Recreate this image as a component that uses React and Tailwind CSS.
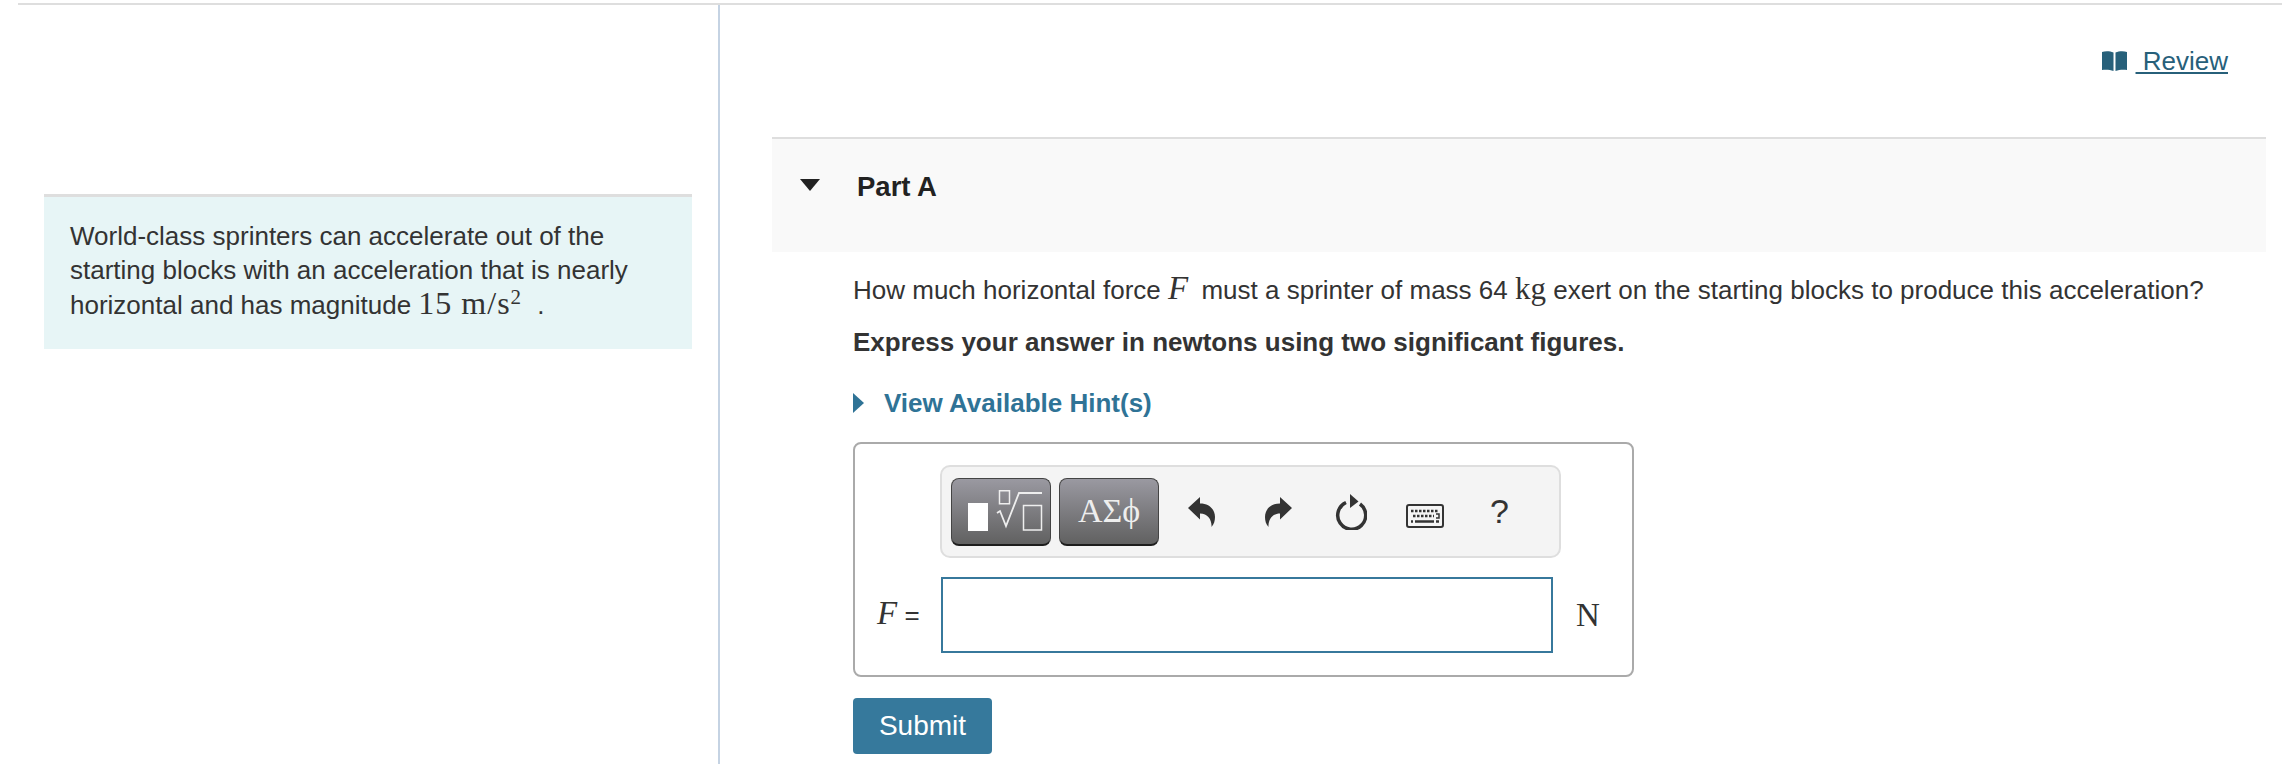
import React from 'react';

const sans = 'font-["Liberation_Sans",Arial,sans-serif]';
const math = 'font-["Liberation_Serif","Times_New_Roman",serif]';

const BookIcon = () => (
  <svg width="25" height="20" viewBox="0 0 25 20" className="shrink-0">
    <path d="M0 1 C3 0 8 0 11.500 1.500 L11.500 20 C8 18.500 3 18.500 0 19 Z" fill="#27607a" />
    <path d="M25 1 C22 0 17 0 13.500 1.500 L13.500 20 C17 18.500 22 18.500 25 19 Z" fill="#27607a" />
  </svg>
);

const SqrtIcon = () => (
  <svg width="76" height="42" viewBox="0 0 76 42" className="ml-[8px]">
    <rect x="1" y="13" width="20" height="28" fill="#fff" />
    <rect x="32.500" y="0.750" width="10" height="13" fill="none" stroke="#eee" strokeWidth="1.500" />
    <path d="M30 23 L33 21 L39 36 L52 3 L75 3" fill="none" stroke="#eee" strokeWidth="1.800" />
    <rect x="56.500" y="15.500" width="18" height="24.500" fill="none" stroke="#eee" strokeWidth="1.500" />
  </svg>
);

const UndoIcon = ({ flip }) => (
  <svg width="27" height="30" viewBox="0 0 27 30" className={flip ? '-scale-x-100' : ''}>
    <path d="M0 11 L12 0 L12 6.500 C22 6.500 27 13 27 20 C27 24 26 27 23.500 30 C24 23 20 16.500 12 16.500 L12 22.500 Z" fill="#333" />
  </svg>
);

const RefreshIcon = () => (
  <svg width="32" height="36" viewBox="0 0 32 36">
    <path d="M11 8.500 A14 14 0 1 0 25 10" fill="none" stroke="#333" strokeWidth="3.500" />
    <path d="M15 0 L23.500 7.500 L15 14 Z" fill="#333" />
  </svg>
);

const KeyboardIcon = () => (
  <svg width="38" height="24" viewBox="0 0 38 24">
    <rect x="1" y="1" width="36" height="22" rx="2" fill="none" stroke="#333" strokeWidth="2" />
    <path d="M5 7 H32" stroke="#333" strokeWidth="2.500" strokeDasharray="2.500 1.500" fill="none" />
    <path d="M7 12 H28" stroke="#333" strokeWidth="2.500" strokeDasharray="2.500 1.500" fill="none" />
    <path d="M30 10 H33 V14 H30" stroke="#333" strokeWidth="1.500" fill="none" />
    <path d="M5 17.500 H7" stroke="#333" strokeWidth="2.500" fill="none" />
    <path d="M9 17.500 H28" stroke="#333" strokeWidth="2.500" fill="none" />
    <path d="M30 17.500 H33" stroke="#333" strokeWidth="2.500" fill="none" />
  </svg>
);

const ToolButton = ({ children }) => (
  <div className="flex h-[68px] items-center justify-center rounded-[8px] border border-[#444] border-b-[2px] border-b-[#1d1d1d] bg-linear-to-b from-[#9a99a1] to-[#616161]">
    {children}
  </div>
);

export default function App() {
  return (
    <div className={`${sans} h-[764px] w-[2282px] overflow-hidden bg-white pt-[3px] pl-[18px] text-[26px] leading-[33.6px] text-[#333]`}>
      <div className="h-[2px] bg-[#dedede]" />
      <div className="flex h-[759px]">
        {/* left column */}
        <div className="w-[702px] shrink-0 border-r-2 border-[#c5d3e3] pt-[189px] pl-[26px]">
          <div className="h-[155px] w-[648px] border-t-[3px] border-[#dedede] bg-[#e7f5f6] px-[26px] pt-[23px]">
            <p>
              World-class sprinters can accelerate out of the starting blocks with an acceleration that is nearly
              horizontal and has magnitude{' '}
              <span className={`${math} text-[32px] leading-none tracking-[1px]`}>
                15 m/s<sup className="text-[21px] leading-none">2</sup>
              </span>{' '}
              <span className="ml-[8px]">.</span>
            </p>
          </div>
        </div>

        {/* right column */}
        <div className="w-[1546px] shrink-0 pl-[52px]">
          <div className="flex h-[132px] items-start justify-end pt-[43px] pr-[38px]">
            <a className="flex items-center gap-[9px] text-[#27607a]">
              <BookIcon />
              <span className="text-[26px] leading-[26px] underline">&nbsp;Review</span>
            </a>
          </div>

          <div className="flex h-[115px] items-start border-t-[2px] border-[#dedede] bg-[#f9f9f9] pt-[29px]">
            <svg width="20" height="12" viewBox="0 0 20 12" className="mt-[11px] ml-[28px]">
              <path d="M0 0 H20 L10 12 Z" fill="#222" />
            </svg>
            <h2 className="ml-[37px] text-[27.5px] font-bold leading-[38px] text-[#222]">Part A</h2>
          </div>

          <div className="pl-[81px]">
            <p className="pt-[20px] whitespace-nowrap">
              How much horizontal force <span className={`${math} pr-[6px] text-[33px] italic leading-none`}>F</span> must a
              sprinter of mass 64 <span className={`${math} text-[31px] leading-none`}>kg</span> exert on the starting
              blocks to produce this acceleration?
            </p>
            <p className="mt-[18px] font-bold">Express your answer in newtons using two significant figures.</p>
            <div className="mt-[26px] flex items-center">
              <svg width="11" height="20" viewBox="0 0 11 20">
                <path d="M0 0 L11 10 L0 20 Z" fill="#2f7396" />
              </svg>
              <span className="ml-[20px] text-[26px] font-bold leading-[36px] text-[#2f7396]">View Available Hint(s)</span>
            </div>

            {/* answer box */}
            <div className="mt-[21px] h-[235px] w-[781px] rounded-[8px] border-2 border-[#aaa] pl-[85px]">
              <div className="mt-[21px] flex h-[93px] w-[621px] items-center rounded-[10px] border-2 border-[#dedede] bg-[#f4f4f4] pl-[9px]">
                <div className="w-[100px]">
                  <ToolButton><SqrtIcon /></ToolButton>
                </div>
                <div className="ml-[8px] w-[100px]">
                  <ToolButton>
                    <span className={`${math} text-[34px] leading-none text-[#eee]`}>ΑΣϕ</span>
                  </ToolButton>
                </div>
                <div className="ml-[29px]"><UndoIcon /></div>
                <div className="ml-[50px]"><UndoIcon flip /></div>
                <div className="ml-[43px]"><RefreshIcon /></div>
                <div className="mt-[8px] ml-[39px]"><KeyboardIcon /></div>
                <span className="mb-[2px] ml-[46px] text-[34px] leading-none">?</span>
              </div>
              <div className="relative mt-[19px] ml-[1px] flex items-center">
                <span className="absolute left-[-64px] whitespace-nowrap">
                  <span className={`${math} text-[33px] italic leading-none`}>F</span> =
                </span>
                <div className="h-[76px] w-[612px] border-2 border-[#37789c] bg-white" />
                <span className={`${math} ml-[23px] text-[33px] leading-none`}>N</span>
              </div>
            </div>

            <button className="mt-[21px] h-[56px] w-[139px] rounded-[4px] bg-[#36799c] text-[28px] text-white">Submit</button>
          </div>
        </div>
      </div>
    </div>
  );
}
